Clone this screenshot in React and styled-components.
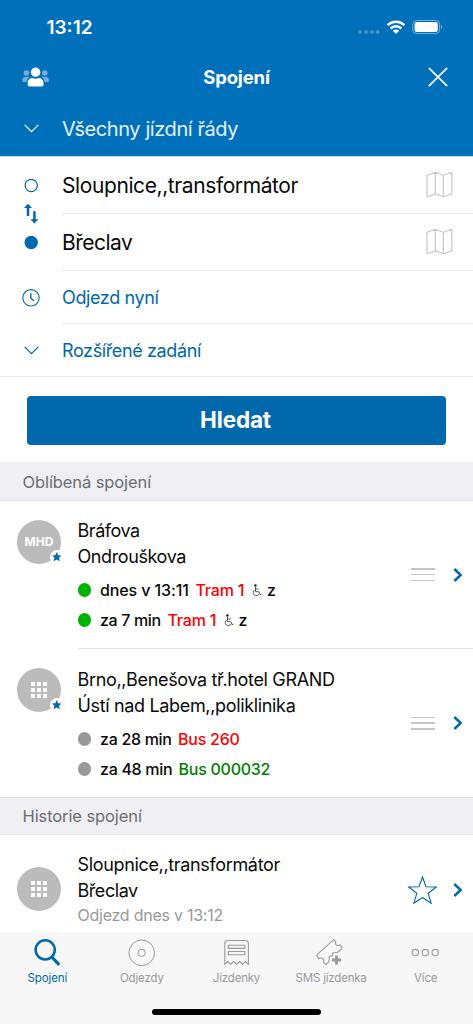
import React from "react";
import styled, { createGlobalStyle } from "styled-components";

const blue = "#0068ab";

const Global = createGlobalStyle`
  * { box-sizing: border-box; }
  body { margin: 0; background: #fff; font-family: Inter, "Liberation Sans", sans-serif; color: #0a0a0a; }
  svg { display: block; flex: none; fill: none; }
`;

const Screen = styled.div`
  width: 473px;
  height: 1024px;
  display: flex;
  flex-direction: column;
  overflow: hidden;
  background: #fff;
`;

const Text = styled.span`
  font-size: ${(p) => p.$size}px;
  font-weight: ${(p) => p.$weight || 400};
  letter-spacing: ${(p) => p.$ls || 0}px;
  color: ${(p) => p.$color || "inherit"};
  white-space: pre;
`;

const Header = styled.header`
  height: 157px;
  background: #0070ba;
  border-bottom: 1px solid #bfd6e8;
  color: #fff;
`;

const StatusBar = styled.div`
  height: 54px;
  padding: 0 30px 0 46.5px;
  display: flex;
  align-items: center;
  justify-content: space-between;
`;

const NavBar = styled.div`
  height: 45px;
  padding: 0 25px 0 22px;
  display: grid;
  grid-template-columns: 48px 1fr 45px;
  align-items: center;
  text-align: center;
  & > :last-child { justify-self: end; }
`;

const Row = styled.div`
  height: ${(p) => p.$h}px;
  display: flex;
`;

const Lead = styled.div`
  width: 62px;
  flex: none;
  display: flex;
  align-items: center;
  justify-content: center;
`;

const RowBody = styled.div`
  flex: 1;
  display: flex;
  align-items: center;
  justify-content: space-between;
  padding-right: 20px;
  border-bottom: ${(p) => (p.$plain ? "none" : "1px solid #ececee")};
  & > svg { margin-bottom: 1px; }
`;

const Form = styled.section`
  height: 220px;
  border-bottom: 1px solid #ebebed;
  position: relative;
`;

const Swap = styled.div`
  position: absolute;
  left: 24px;
  top: 46px;
`;

const ButtonArea = styled.div`
  height: 85px;
  padding: 19px 27px 0;
`;

const SearchButton = styled.button`
  width: 100%;
  height: 48.5px;
  border: 0;
  padding: 0 2px 1px 0;
  border-radius: 4px;
  background: ${blue};
  color: #fff;
  font-family: inherit;
  display: flex;
  align-items: center;
  justify-content: center;
`;

const SectionHeader = styled.h2`
  margin: 0;
  height: ${(p) => p.$h}px;
  padding-left: 22.5px;
  display: flex;
  align-items: center;
  background: #efeff4;
  border-top: 1px solid ${(p) => (p.$line ? "#dfdfe3" : "#efeff4")};
  border-bottom: 1px solid #e6e6ea;
  color: #6d6d72;
`;

const Item = styled.article`
  height: ${(p) => p.$h}px;
  display: flex;
`;

const AvatarCol = styled.div`
  width: 77.5px;
  flex: none;
  padding: ${(p) => p.$top}px 0 0 17px;
`;

const Avatar = styled.div`
  position: relative;
  width: 44px;
  height: 44px;
  border-radius: 50%;
  background: #bbb;
  color: #fff;
  display: flex;
  align-items: center;
  justify-content: center;
`;

const Badge = styled.div`
  position: absolute;
  right: -2.5px;
  bottom: 0;
  width: 14px;
  height: 14px;
  border-radius: 50%;
  background: #fff;
  display: flex;
  align-items: center;
  justify-content: center;
`;

const Dots = styled.div`
  display: grid;
  grid-template-columns: repeat(3, 4.4px);
  grid-auto-rows: 4.4px;
  gap: 1.8px;
  & > i { background: #fff; }
`;

const ItemBody = styled.div`
  flex: 1;
  display: flex;
  border-bottom: ${(p) => (p.$line ? "1px solid #e4e4e6" : "none")};
`;

const Info = styled.div`
  flex: 1;
  padding-top: ${(p) => p.$top}px;
  display: flex;
  flex-direction: column;
`;

const Place = styled.div`
  height: ${(p) => p.$h || 26}px;
  display: flex;
  align-items: center;
`;

const Departures = styled.div`
  margin-top: 6px;
`;

const Departure = styled.div`
  height: 30px;
  display: flex;
  align-items: center;
`;

const StatusDot = styled.i`
  flex: none;
  width: 13.5px;
  height: 13.5px;
  border-radius: 50%;
  margin-right: 9px;
  background: ${(p) => p.$color};
`;

const Slot = styled.span`
  display: inline-flex;
  flex: none;
  width: ${(p) => p.$w}px;
`;

const Actions = styled.div`
  display: flex;
  align-items: center;
  gap: ${(p) => p.$gap}px;
  padding-right: 11px;
  padding-top: ${(p) => p.$shift || 0}px;
`;

const Grip = styled.div`
  width: 24px;
  height: 13px;
  display: flex;
  flex-direction: column;
  justify-content: space-between;
  & > i { height: 1.5px; background: #c6c6c6; }
`;

const TabBar = styled.nav`
  height: 92px;
  background: #f7f7f7;
  display: flex;
  flex-direction: column;
  justify-content: space-between;
  align-items: center;
`;

const Tabs = styled.div`
  width: 100%;
  display: grid;
  grid-template-columns: repeat(5, 1fr);
`;

const Tab = styled.div`
  display: flex;
  flex-direction: column;
  align-items: center;
  padding-top: 5px;
  color: ${(p) => (p.$active ? blue : "#999")};
  & > span { line-height: 16px; margin-top: 3px; }
`;

const HomeIndicator = styled.div`
  width: 169px;
  height: 5.5px;
  margin-bottom: 9.5px;
  border-radius: 3px;
  background: #000;
`;

const StatusIcons = () => (
  <svg width="86" height="18" viewBox="357 18 86 18">
    <g fill="#fff" fillOpacity=".25">
      <circle cx="360" cy="32" r="2" /><circle cx="366" cy="32" r="2" />
      <circle cx="372" cy="32" r="2" /><circle cx="377.8" cy="32" r="2" />
    </g>
    <g stroke="#fff" strokeWidth="2.5">
      <path d="M387.6 25.2a12 12 0 0 1 16.8 0" />
      <path d="M390.6 28.5a7.8 7.8 0 0 1 10.8 0" />
    </g>
    <path d="M396 34l-3.2-3.2a4.6 4.6 0 0 1 6.4 0z" fill="#fff" />
    <rect x="412.8" y="20.4" width="26.8" height="13.2" rx="3.8" stroke="#fff" strokeOpacity=".45" strokeWidth="1" />
    <rect x="414.6" y="22" width="23.2" height="10" rx="2.2" fill="#fff" />
    <path d="M441 25v4a2.3 2.3 0 0 0 0-4z" fill="#fff" fillOpacity=".5" />
  </svg>
);

const PeopleIcon = () => (
  <svg width="27" height="20" viewBox="22 66 27 20">
    <g fill="#72afd8">
      <circle cx="26.4" cy="72" r="2.8" /><circle cx="44.8" cy="72" r="2.8" />
      <path d="M22.2 79.5q0-3.7 3.8-3.7h3.6q-2.4 1.4-2.7 5.2h-3.6q-1.1 0-1.1-1.5z" />
      <path d="M49 79.5q0-3.7-3.8-3.7h-3.6q2.4 1.4 2.7 5.2h3.6q1.1 0 1.1-1.5z" />
    </g>
    <circle cx="35.6" cy="71.3" r="4.7" fill="#fff" />
    <path d="M27.6 83.3c0-4 1.8-6.3 4.6-6.3q3.4 1.3 6.8 0c2.8 0 4.6 2.3 4.6 6.3q0 2.2-1.8 2.2H29.4q-1.8 0-1.8-2.2z" fill="#fff" />
  </svg>
);

const CloseIcon = () => (
  <svg width="20" height="20" viewBox="0 0 20 20" stroke="#fff" strokeWidth="1.7" strokeLinecap="round">
    <path d="M1.3 1.3l17.4 17.4M18.7 1.3L1.3 18.7" />
  </svg>
);

const ChevronDown = ({ color }) => (
  <svg width="15" height="9" viewBox="0 0 15 9" stroke={color} strokeWidth="1.2">
    <path d="M.7.8l6.8 6.8L14.3.8" />
  </svg>
);

const CircleIcon = ({ filled }) => (
  <svg width="14" height="14" viewBox="0 0 14 14" stroke={blue} strokeWidth="1.2">
    <circle cx="7.2" cy="6.500" r="6.100" fill={filled ? blue : "none"} />
  </svg>
);

const SwapIcon = () => (
  <svg width="15" height="21" viewBox="24 203 15 21">
    <path d="M28 216v-10M34.4 211.2v10" stroke={blue} strokeWidth="2.500" />
    <path d="M24 208l4-4.3 4 4.3zM30.4 219.2l4 4.3 4-4.3z" fill={blue} />
  </svg>
);

const ClockIcon = () => (
  <svg width="18" height="18" viewBox="0 0 18 18" stroke={blue} strokeWidth="1.1">
    <circle cx="9" cy="8.800" r="8.2" />
    <path d="M8.8 4.2v5l3.2 2.6" strokeWidth="1.4" />
  </svg>
);

const MapIcon = () => (
  <svg width="27" height="27" viewBox="0 0 27 27" stroke="#c9c9c9" strokeWidth="1.2" strokeLinejoin="round">
    <path d="M1 4.2L9.3 1.3l8 2.9 8.5-2.9v21.600l-8.5 2.900-8-2.900L1 25.800zM9.3 1.3V22.900M17.3 4.2v21.600" />
  </svg>
);

const SmallStar = () => (
  <svg width="9.500" height="9.500" viewBox="0 0 24 24">
    <path fill={blue} d="M12 0l3.600 8 8.400.9-6.300 5.800 1.900 8.600L12 18.900l-7.600 4.400 1.900-8.600L0 8.900 8.400 8z" />
  </svg>
);

const BigStar = () => (
  <svg width="29" height="28" viewBox="0 0 29 28" stroke={blue} strokeWidth="1.1">
    <path d="M14.500 1l3.500 9.700 10.300.3-8.100 6.300 2.900 9.900-8.600-5.700-8.600 5.700 2.900-9.900L.7 11l10.300-.3z" />
  </svg>
);

const ChevronRight = () => (
  <svg width="9.500" height="14" viewBox="0 0 9.500 14" stroke={blue} strokeWidth="2.400">
    <path d="M1.300 1L7.700 7l-6.400 6" />
  </svg>
);

const Wheelchair = () => (
  <svg width="10" height="13" viewBox="0 0 10 13" stroke="#444" strokeWidth=".9">
    <circle cx="3.400" cy="1.500" r="1.300" fill="#222" stroke="none" />
    <path d="M3.500 3v4.700h3.400l1.300 3 1.400-.5M3.600 5h2.900" />
    <path d="M2.600 6.100a3 3 0 1 0 4.400 3.700" />
  </svg>
);

const SearchIcon = () => (
  <svg width="30" height="30" viewBox="32 937 30 30" stroke={blue}>
    <circle cx="45.200" cy="949.800" r="9.600" strokeWidth="2.500" />
    <path d="M51.800 957l7.400 7.800" strokeWidth="3.200" />
  </svg>
);

const DepartIcon = () => (
  <svg width="30" height="30" viewBox="0 0 30 30" stroke="#999" strokeWidth="1">
    <circle cx="14.700" cy="15.800" r="12.800" /><circle cx="14.700" cy="15.800" r="3.600" />
  </svg>
);

const TicketIcon = () => (
  <svg width="30" height="30" viewBox="221.500 937 30 30" stroke="#999" strokeWidth="1.100">
    <path d="M225.300 964.200v-20.700q0-3 3-3h17.600q3 0 3 3v20.700l-2.950-2.600-2.950 2.600-2.950-2.600-2.950 2.600-2.950-2.600-2.950 2.600-2.950-2.600z" />
    <path d="M228.800 945.200h16.600v3.200h-16.600zM228.800 951.500h16.600v3.200h-16.600z" />
  </svg>
);

const SmsIcon = () => (
  <svg width="30" height="30" viewBox="316 937 30 30" stroke="#999" strokeWidth="1.100" strokeLinejoin="round">
    <path d="M329.200 956.200v3.300l-.8 2.600-2.500 2.600-2.400-2.500q1-3-1.200-3.900-2-.7-3.600.5l-1.900-3.900 16.900-15.300 2 2.300q-.8 2.400 1 3.400 1.600.7 3.500-.4l1.700 2.700-.6 1.600-4 3.300-4.600.3v2.900z" />
    <path d="M336.500 955.400v9.200M331.900 960h9.200" strokeWidth="2.800" />
  </svg>
);

const MoreIcon = () => (
  <svg width="30" height="30" viewBox="0 0 30 30" stroke="#999" strokeWidth="1.100">
    <circle cx="4.400" cy="15.600" r="3.200" /><circle cx="14.300" cy="15.600" r="3.200" /><circle cx="24.200" cy="15.600" r="3.200" />
  </svg>
);

const GridDots = () => (
  <Dots>{Array.from({ length: 9 }, (_, i) => <i key={i} />)}</Dots>
);

const favourites = [
  {
    height: 148, avatarTop: 18.5, infoTop: 16, line: true, city: true,
    from: ["Bráfova", -0.45], to: ["Ondrouškova", -0.4],
    departures: [
      { time: "dnes v 13:11", ls: -0.1, slot: 95.5, service: "Tram 1", serviceLs: -0.2, serviceSlot: 56.5, access: true, dot: "#00b300", color: "#ff0000" },
      { time: "za 7 min", ls: -0.35, slot: 67.500, service: "Tram 1", serviceLs: -0.2, serviceSlot: 56, access: true, dot: "#00b300", color: "#ff0000" },
    ],
  },
  {
    height: 148, avatarTop: 19, infoTop: 17, line: false, city: false,
    from: ["Brno,,Benešova tř.hotel GRAND", -0.34], to: ["Ústí nad Labem,,poliklinika", -0.34],
    departures: [
      { time: "za 28 min", ls: -0.3, slot: 78, service: "Bus 260", serviceLs: -0.25, serviceSlot: 70, dot: "#999", color: "#ff0000" },
      { time: "za 48 min", ls: -0.3, slot: 78.500, service: "Bus 000032", serviceLs: -0.25, serviceSlot: 95, dot: "#999", color: "#008000" },
    ],
  },
];

const tabs = [
  { label: "Spojení", Icon: SearchIcon, active: true, ls: -0.1 },
  { label: "Odjezdy", Icon: DepartIcon, ls: -0.15 },
  { label: "Jízdenky", Icon: TicketIcon, ls: -0.2 },
  { label: "SMS jízdenka", Icon: SmsIcon, ls: -0.2 },
  { label: "Více", Icon: MoreIcon, ls: -0.2 },
];

export default function App() {
  return (
    <Screen>
      <Global />
      <Header>
        <StatusBar>
          <Text $size={19} $weight={600}>13:12</Text>
          <StatusIcons />
        </StatusBar>
        <NavBar>
          <PeopleIcon />
          <Text $size={18.500} $weight={700} $ls={-0.150}>Spojení</Text>
          <CloseIcon />
        </NavBar>
        <Row $h={59}>
          <Lead><ChevronDown color="#fff" /></Lead>
          <RowBody $plain>
            <Text $size={20} $ls={-0.420} $color="#e6f1f8">Všechny jízdní řády</Text>
          </RowBody>
        </Row>
      </Header>
      <Form>
        <Row $h={57}>
          <Lead><CircleIcon /></Lead>
          <RowBody><Text $size={21} $ls={-0.400}>Sloupnice,,transformátor</Text><MapIcon /></RowBody>
        </Row>
        <Row $h={57}>
          <Lead><CircleIcon filled /></Lead>
          <RowBody><Text $size={21} $ls={-0.500}>Břeclav</Text><MapIcon /></RowBody>
        </Row>
        <Row $h={53}>
          <Lead><ClockIcon /></Lead>
          <RowBody><Text $size={18} $ls={-0.380} $color={blue}>Odjezd nyní</Text></RowBody>
        </Row>
        <Row $h={53}>
          <Lead><ChevronDown color={blue} /></Lead>
          <RowBody $plain><Text $size={18} $ls={-0.380} $color={blue}>Rozšířené zadání</Text></RowBody>
        </Row>
        <Swap><SwapIcon /></Swap>
      </Form>
      <ButtonArea>
        <SearchButton><Text $size={22.500} $weight={700} $ls={-0.150}>Hledat</Text></SearchButton>
      </ButtonArea>
      <SectionHeader $h={39}><Text $size={16.500} $ls={-0.100}>Oblíbená spojení</Text></SectionHeader>
      {favourites.map((f) => (
        <Item key={f.from[0]} $h={f.height}>
          <AvatarCol $top={f.avatarTop}>
            <Avatar>
              {f.city ? <Text $size={12} $weight={700}>MHD</Text> : <GridDots />}
              <Badge><SmallStar /></Badge>
            </Avatar>
          </AvatarCol>
          <ItemBody $line={f.line}>
            <Info $top={f.infoTop}>
              <Place><Text $size={18} $ls={f.from[1]}>{f.from[0]}</Text></Place>
              <Place><Text $size={18} $ls={f.to[1]}>{f.to[0]}</Text></Place>
              <Departures>
                {f.departures.map((d) => (
                  <Departure key={d.time}>
                    <StatusDot $color={d.dot} />
                    <Slot $w={d.slot}><Text $size={16} $weight={500} $ls={d.ls}>{d.time}</Text></Slot>
                    <Slot $w={d.serviceSlot}><Text $size={16} $ls={d.serviceLs} $weight={450} $color={d.color}>{d.service}</Text></Slot>
                    {d.access && <><Slot $w={15}><Wheelchair /></Slot><Text $size={16} $weight={500}>z</Text></>}
                  </Departure>
                ))}
              </Departures>
            </Info>
            <Actions $gap={17.5}><Grip><i /><i /><i /></Grip><ChevronRight /></Actions>
          </ItemBody>
        </Item>
      ))}
      <SectionHeader $h={38} $line><Text $size={16.500} $ls={-0.100}>Historie spojení</Text></SectionHeader>
      <Item $h={97}>
        <AvatarCol $top={32}><Avatar><GridDots /></Avatar></AvatarCol>
        <ItemBody>
          <Info $top={16}>
            <Place><Text $size={18} $ls={-0.340}>Sloupnice,,transformátor</Text></Place>
            <Place><Text $size={18} $ls={-0.450}>Břeclav</Text></Place>
            <Place $h={24}><Text $size={16} $ls={-0.25} $color="#999">Odjezd dnes v 13:12</Text></Place>
          </Info>
          <Actions $gap={15.5} $shift={12}><BigStar /><ChevronRight /></Actions>
        </ItemBody>
      </Item>
      <TabBar>
        <Tabs>
          {tabs.map(({ label, Icon, active, ls }) => (
            <Tab key={label} $active={active}>
              <Icon />
              <Text $size={11.500} $ls={ls}>{label}</Text>
            </Tab>
          ))}
        </Tabs>
        <HomeIndicator />
      </TabBar>
    </Screen>
  );
}
